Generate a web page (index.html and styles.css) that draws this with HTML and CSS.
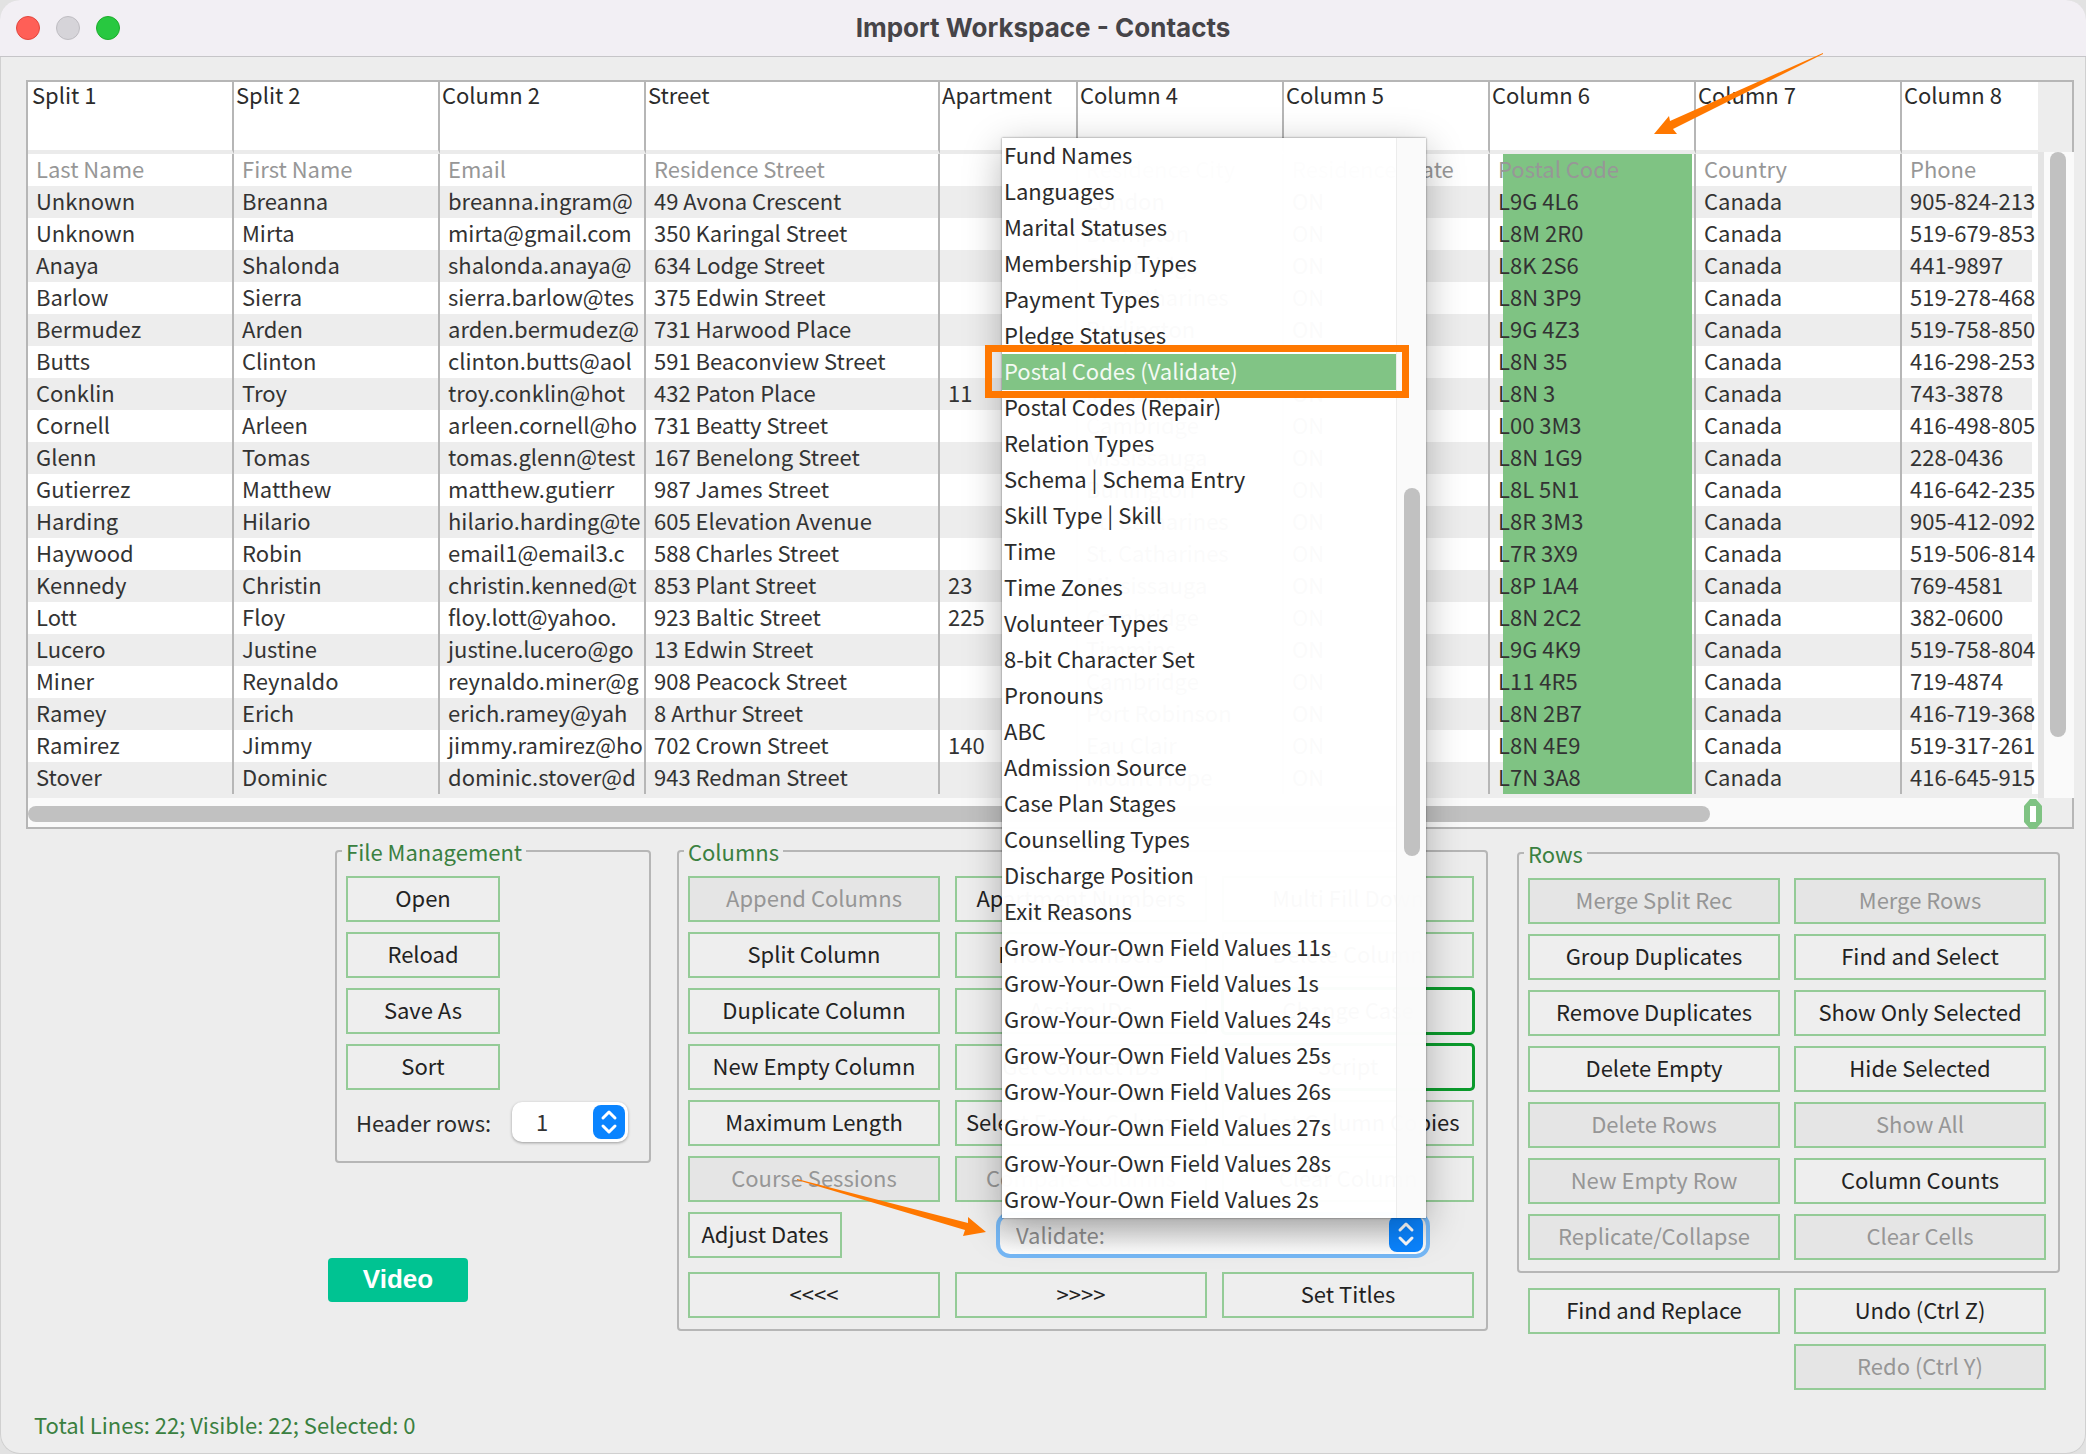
FILE: index.html
```html
<!DOCTYPE html>
<html lang="en">
<head>
    <meta charset="UTF-8">
    <meta name="viewport" content="width=device-width, initial-scale=1.0">
    <title>Import Workspace - Contacts</title>
    <link rel="stylesheet" href="styles.css">
</head>
<body>

<div class="window">
    <header class="titlebar">
        <div class="lights">
            <span class="light close"></span>
            <span class="light minimize"></span>
            <span class="light zoom"></span>
        </div>
        <h1>Import Workspace - Contacts</h1>
    </header>

    <!-- Imported data -->
    <div class="sheet">
        <table>
            <colgroup>
                <col class="normal"><col class="normal"><col class="normal"><col class="wide"><col class="narrow">
                <col class="normal"><col class="normal"><col class="normal"><col class="normal"><col>
            </colgroup>
            <thead>
                <tr><th>Split 1</th><th>Split 2</th><th>Column 2</th><th>Street</th><th>Apartment</th><th>Column 4</th><th>Column 5</th><th>Column 6</th><th>Column 7</th><th>Column 8</th></tr>
            </thead>
            <tbody>
                <tr class="titles"><td>Last Name</td><td>First Name</td><td>Email</td><td>Residence Street</td><td></td><td>Residence City</td><td>Residence State</td><td class="picked">Postal Code</td><td>Country</td><td>Phone</td></tr>
                <tr><td>Unknown</td><td>Breanna</td><td>breanna.ingram@</td><td>49 Avona Crescent</td><td></td><td>London</td><td>ON</td><td class="picked">L9G 4L6</td><td>Canada</td><td>905-824-213</td></tr>
                <tr><td>Unknown</td><td>Mirta</td><td>mirta@gmail.com</td><td>350 Karingal Street</td><td></td><td>Brampton</td><td>ON</td><td class="picked">L8M 2R0</td><td>Canada</td><td>519-679-853</td></tr>
                <tr><td>Anaya</td><td>Shalonda</td><td>shalonda.anaya@</td><td>634 Lodge Street</td><td></td><td>Cambridge</td><td>ON</td><td class="picked">L8K 2S6</td><td>Canada</td><td>441-9897</td></tr>
                <tr><td>Barlow</td><td>Sierra</td><td>sierra.barlow@tes</td><td>375 Edwin Street</td><td></td><td>St. Catharines</td><td>ON</td><td class="picked">L8N 3P9</td><td>Canada</td><td>519-278-468</td></tr>
                <tr><td>Bermudez</td><td>Arden</td><td>arden.bermudez@</td><td>731 Harwood Place</td><td></td><td>Burlington</td><td>ON</td><td class="picked">L9G 4Z3</td><td>Canada</td><td>519-758-850</td></tr>
                <tr><td>Butts</td><td>Clinton</td><td>clinton.butts@aol</td><td>591 Beaconview Street</td><td></td><td>Burlington</td><td>ON</td><td class="picked">L8N 35</td><td>Canada</td><td>416-298-253</td></tr>
                <tr><td>Conklin</td><td>Troy</td><td>troy.conklin@hot</td><td>432 Paton Place</td><td>11</td><td>Mississauga</td><td>ON</td><td class="picked">L8N 3</td><td>Canada</td><td>743-3878</td></tr>
                <tr><td>Cornell</td><td>Arleen</td><td>arleen.cornell@ho</td><td>731 Beatty Street</td><td></td><td>Cambridge</td><td>ON</td><td class="picked">L00 3M3</td><td>Canada</td><td>416-498-805</td></tr>
                <tr><td>Glenn</td><td>Tomas</td><td>tomas.glenn@test</td><td>167 Benelong Street</td><td></td><td>Mississauga</td><td>ON</td><td class="picked">L8N 1G9</td><td>Canada</td><td>228-0436</td></tr>
                <tr><td>Gutierrez</td><td>Matthew</td><td>matthew.gutierr</td><td>987 James Street</td><td></td><td>Burlington</td><td>ON</td><td class="picked">L8L 5N1</td><td>Canada</td><td>416-642-235</td></tr>
                <tr><td>Harding</td><td>Hilario</td><td>hilario.harding@te</td><td>605 Elevation Avenue</td><td></td><td>St. Catharines</td><td>ON</td><td class="picked">L8R 3M3</td><td>Canada</td><td>905-412-092</td></tr>
                <tr><td>Haywood</td><td>Robin</td><td>email1@email3.c</td><td>588 Charles Street</td><td></td><td>St. Catharines</td><td>ON</td><td class="picked">L7R 3X9</td><td>Canada</td><td>519-506-814</td></tr>
                <tr><td>Kennedy</td><td>Christin</td><td>christin.kenned@t</td><td>853 Plant Street</td><td>23</td><td>Mississauga</td><td>ON</td><td class="picked">L8P 1A4</td><td>Canada</td><td>769-4581</td></tr>
                <tr><td>Lott</td><td>Floy</td><td>floy.lott@yahoo.</td><td>923 Baltic Street</td><td>225</td><td>Cambridge</td><td>ON</td><td class="picked">L8N 2C2</td><td>Canada</td><td>382-0600</td></tr>
                <tr><td>Lucero</td><td>Justine</td><td>justine.lucero@go</td><td>13 Edwin Street</td><td></td><td>Timmins</td><td>ON</td><td class="picked">L9G 4K9</td><td>Canada</td><td>519-758-804</td></tr>
                <tr><td>Miner</td><td>Reynaldo</td><td>reynaldo.miner@g</td><td>908 Peacock Street</td><td></td><td>Cambridge</td><td>ON</td><td class="picked">L11 4R5</td><td>Canada</td><td>719-4874</td></tr>
                <tr><td>Ramey</td><td>Erich</td><td>erich.ramey@yah</td><td>8 Arthur Street</td><td></td><td>Port Robinson</td><td>ON</td><td class="picked">L8N 2B7</td><td>Canada</td><td>416-719-368</td></tr>
                <tr><td>Ramirez</td><td>Jimmy</td><td>jimmy.ramirez@ho</td><td>702 Crown Street</td><td>140</td><td>Eau Clair</td><td>ON</td><td class="picked">L8N 4E9</td><td>Canada</td><td>519-317-261</td></tr>
                <tr><td>Stover</td><td>Dominic</td><td>dominic.stover@d</td><td>943 Redman Street</td><td></td><td>Mount Hope</td><td>ON</td><td class="picked">L7N 3A8</td><td>Canada</td><td>416-645-915</td></tr>
            </tbody>
        </table>
        <div class="side">
            <div class="corner"></div>
            <div class="vscroll"><div class="vthumb"></div></div>
        </div>
        <div class="hscroll"><div class="hthumb"></div></div>
        <div class="corner bottom">
            <svg class="zero" width="18" height="30" viewBox="0 0 18 30">
                <path fill="#7fc383" d="M6 0h6l6 7v16l-6 7H6l-6-7V7z"/>
                <path fill="#fff" d="M6 7h6v16H6z"/>
            </svg>
        </div>
    </div>

    <!-- Tools -->
    <main class="tools">
        <div class="left">
            <fieldset class="files">
                <legend>File Management</legend>
                <button type="button">Open</button>
                <button type="button">Reload</button>
                <button type="button">Save As</button>
                <button type="button">Sort</button>
                <div class="header-rows">
                    <label for="headerRows">Header rows:</label>
                    <div class="select">
                        <select id="headerRows">
                            <option>1</option>
                        </select>
                        <svg class="knob" width="32" height="34" viewBox="0 0 32 34">
                            <rect width="32" height="34" rx="8" fill="#0a84ff"/>
                            <path d="M10 13l6-6 6 6M10 21l6 6 6-6" fill="none" stroke="#fff" stroke-width="3" stroke-linecap="round" stroke-linejoin="round"/>
                        </svg>
                    </div>
                </div>
            </fieldset>
            <button type="button" class="video">Video</button>
        </div>

        <fieldset class="columns">
            <legend>Columns</legend>
            <button type="button" disabled>Append Columns</button>
            <button type="button">Apartment Numbers</button>
            <button type="button">Multi Fill Down</button>
            <button type="button">Split Column</button>
            <button type="button">Phone Numbers</button>
            <button type="button">Delete Column</button>
            <button type="button">Duplicate Column</button>
            <button type="button">Assign IDs</button>
            <button type="button" class="strong">Change Case</button>
            <button type="button">New Empty Column</button>
            <button type="button">Get Contact IDs</button>
            <button type="button" class="strong">Script</button>
            <button type="button">Maximum Length</button>
            <button type="button">Select Empty Columns</button>
            <button type="button">Select Column Copies</button>
            <button type="button" disabled>Course Sessions</button>
            <button type="button" disabled>Compare Columns</button>
            <button type="button">Clear Column</button>
            <div class="dates">
                <button type="button">Adjust Dates</button>
                <div class="select validate">
                    <select id="validate" aria-label="Validate">
                        <option>Validate:</option>
                    </select>
                    <svg class="knob" width="34" height="36" viewBox="0 0 34 36">
                        <rect width="34" height="36" rx="8" fill="#0a84ff"/>
                        <path d="M11 14l6-6 6 6M11 22l6 6 6-6" fill="none" stroke="#fff" stroke-width="3" stroke-linecap="round" stroke-linejoin="round"/>
                    </svg>

                    <!-- Open list of the validate box -->
                    <div class="menu">
                        <ul role="listbox" aria-label="Validate">
                            <li role="option">Fund Names</li>
                            <li role="option">Languages</li>
                            <li role="option">Marital Statuses</li>
                            <li role="option">Membership Types</li>
                            <li role="option">Payment Types</li>
                            <li role="option">Pledge Statuses</li>
                            <li role="option" aria-selected="true" class="selected">Postal Codes (Validate)</li>
                            <li role="option">Postal Codes (Repair)</li>
                            <li role="option">Relation Types</li>
                            <li role="option">Schema | Schema Entry</li>
                            <li role="option">Skill Type | Skill</li>
                            <li role="option">Time</li>
                            <li role="option">Time Zones</li>
                            <li role="option">Volunteer Types</li>
                            <li role="option">8-bit Character Set</li>
                            <li role="option">Pronouns</li>
                            <li role="option">ABC</li>
                            <li role="option">Admission Source</li>
                            <li role="option">Case Plan Stages</li>
                            <li role="option">Counselling Types</li>
                            <li role="option">Discharge Position</li>
                            <li role="option">Exit Reasons</li>
                            <li role="option">Grow-Your-Own Field Values 11s</li>
                            <li role="option">Grow-Your-Own Field Values 1s</li>
                            <li role="option">Grow-Your-Own Field Values 24s</li>
                            <li role="option">Grow-Your-Own Field Values 25s</li>
                            <li role="option">Grow-Your-Own Field Values 26s</li>
                            <li role="option">Grow-Your-Own Field Values 27s</li>
                            <li role="option">Grow-Your-Own Field Values 28s</li>
                            <li role="option">Grow-Your-Own Field Values 2s</li>
                        </ul>
                        <div class="menu-scroll"><div class="menu-thumb"></div></div>
                    </div>
                    <svg class="arrow to-validate" width="190" height="60" viewBox="0 0 190 60">
                        <path fill="#ff7800" d="M0 1L171 45V39L189 54L166 58L168 52L0 2z"/>
                    </svg>
                </div>
            </div>
            <button type="button">&lt;&lt;&lt;&lt;</button>
            <button type="button">&gt;&gt;&gt;&gt;</button>
            <button type="button">Set Titles</button>
        </fieldset>

        <div class="right">
            <fieldset class="rows">
                <legend>Rows</legend>
                <button type="button" disabled>Merge Split Rec</button>
                <button type="button" disabled>Merge Rows</button>
                <button type="button">Group Duplicates</button>
                <button type="button">Find and Select</button>
                <button type="button">Remove Duplicates</button>
                <button type="button">Show Only Selected</button>
                <button type="button">Delete Empty</button>
                <button type="button">Hide Selected</button>
                <button type="button" disabled>Delete Rows</button>
                <button type="button" disabled>Show All</button>
                <button type="button" disabled>New Empty Row</button>
                <button type="button">Column Counts</button>
                <button type="button" disabled>Replicate/Collapse</button>
                <button type="button" disabled>Clear Cells</button>
            </fieldset>
            <div class="history">
                <button type="button">Find and Replace</button>
                <button type="button">Undo (Ctrl Z)</button>
                <button type="button" class="redo" disabled>Redo (Ctrl Y)</button>
            </div>
        </div>
    </main>

    <footer>Total Lines: 22; Visible: 22; Selected: 0</footer>

    <svg class="arrow to-column" width="170" height="82" viewBox="0 0 170 82">
        <path fill="#ff7800" d="M169 0L16 68L15 63L0 81H23L19 76L169 1z"/>
    </svg>
</div>

</body>
</html>
```
FILE: styles.css
```css
* {
    box-sizing: border-box;
}

body {
    margin: 0;
    background-color: #e2e2e2;
    font-family: "Noto Sans CJK SC", "Noto Sans", sans-serif;
    font-size: 22px;
    line-height: 32px;
    color: #2b2b2b;
}

.window {
    position: relative;
    display: flex;
    flex-direction: column;
    min-height: 100vh;
    background-color: #ededed;
    border-radius: 20px;
    box-shadow: inset 0 0 0 1px #d0d0d0;
}

/* Title bar */
.titlebar {
    display: grid;
    grid-template-columns: 1fr auto 1fr;
    align-items: center;
    height: 57px;
    padding: 0 16px;
    background-color: #f2eff4;
    border-bottom: 1px solid #c6c5c8;
    border-radius: 20px 20px 0 0;
}

.titlebar h1 {
    margin: 0;
    font-family: Inter, sans-serif;
    font-size: 26px;
    font-weight: 700;
    color: #464448;
}

.lights {
    display: flex;
    gap: 16px;
}

.light {
    width: 24px;
    height: 24px;
    border-radius: 50%;
    border: 1px solid #e2463d;
    background-color: #ff5f57;
}

.minimize {
    border-color: #bfbdc2;
    background-color: #d6d4d9;
}

.zoom {
    border-color: #1dad2b;
    background-color: #28c840;
}

/* Data sheet */
.sheet {
    display: grid;
    grid-template-columns: 1fr 36px;
    margin: 23px 12px 0 26px;
    border: solid #b6b6b6;
    border-width: 2px 0 2px 2px;
}

table {
    width: 100%;
    table-layout: fixed;
    border-collapse: separate;
    border-spacing: 0;
    margin-bottom: 4px;
}

.normal {
    width: 206px;
}

.wide {
    width: 294px;
}

.narrow {
    width: 138px;
}

th, td {
    padding: 0 0 0 8px;
    border-right: 2px solid #b6b6b6;
    text-align: left;
    vertical-align: top;
    font-weight: normal;
    white-space: nowrap;
}

th {
    height: 72px;
    padding-left: 2px;
    line-height: 25px;
    background-color: #fff;
    border-bottom: 4px solid #ebebeb;
}

td {
    height: 32px;
    line-height: 29px;
    color: #333;
}

th:first-child {
    padding-left: 4px;
}

th:last-child {
    border-right: none;
}

td:last-child {
    border-right: 6px solid #fff;
}

tbody tr:nth-child(odd) {
    background-color: #fff;
}

.titles td {
    color: #979797;
}

.picked {
    background-image: linear-gradient(#7fc383, #7fc383);
    background-size: calc(100% - 15px) 100%;
    background-position: 13px 0;
    background-repeat: no-repeat;
}

.side {
    display: flex;
    flex-direction: column;
}

.corner {
    height: 70px;
    border-right: 2px solid #b6b6b6;
}

.vscroll {
    flex: 1;
    padding: 0 8px 0 6px;
    border-left: 6px solid #e4e4e4;
    background-color: #fafafa;
}

.vthumb {
    width: 16px;
    height: 585px;
    border-radius: 8px;
    background-color: #c1c1c1;
}

.hscroll {
    height: 29px;
    padding: 8px 328px 0 0;
    background-color: #fafafa;
}

.hthumb {
    height: 16px;
    border-radius: 8px;
    background-color: #c1c1c1;
}

.bottom {
    position: relative;
    height: 29px;
}

.zero {
    position: absolute;
    left: -14px;
    top: 1px;
}

/* Tools under the sheet */
.tools {
    display: flex;
    justify-content: flex-end;
    align-items: flex-start;
    gap: 26px;
    padding: 6px 26px 0;
}

fieldset {
    margin: 0;
    min-width: 0;
    padding: 9px 9px 11px;
    border: 2px solid #b6b6b6;
    border-radius: 4px;
}

legend {
    margin-left: -4px;
    padding: 0 4px;
    color: #3a8040;
}

button {
    height: 46px;
    padding: 0 0 4px;
    border: 2px solid #94cb97;
    background-color: #eee;
    font: inherit;
    line-height: 32px;
    color: #222;
    white-space: nowrap;
}

button:disabled {
    background-color: #e5e5e5;
    color: #969696;
}

.strong {
    border-color: #0b9a2c;
    border-radius: 4px;
    box-shadow: 0 0 0 1px #0b9a2c;
}

.left {
    width: 323px;
}

.files {
    margin-left: 7px;
}

.files button {
    display: block;
    width: 154px;
    margin-bottom: 10px;
}

.header-rows {
    display: flex;
    align-items: center;
    justify-content: space-between;
    height: 50px;
    padding: 0 12px 6px 10px;
}

.select {
    position: relative;
    width: 116px;
    height: 40px;
}

.select select {
    width: 100%;
    height: 100%;
    padding: 0 0 3px 24px;
    appearance: none;
    border: none;
    border-radius: 10px;
    background-color: #fff;
    box-shadow: 0 1px 3px rgba(0, 0, 0, 0.35);
    font: inherit;
    color: #333;
}

.knob {
    position: absolute;
    right: 3px;
    top: 3px;
}

.video {
    display: block;
    width: 140px;
    height: 44px;
    margin-top: 95px;
    padding-bottom: 2px;
    border: none;
    border-radius: 4px;
    background-color: #00c392;
    font-family: "Liberation Sans", Arial, sans-serif;
    font-size: 26px;
    font-weight: bold;
    color: #fff;
}

.columns {
    display: grid;
    grid-template-columns: repeat(3, 252px);
    gap: 10px 15px;
    padding-right: 12px;
}

.dates {
    grid-column: 1 / -1;
    display: flex;
    justify-content: space-between;
    height: 50px;
    padding-right: 48px;
}

.dates button {
    width: 154px;
}

.validate {
    width: 426px;
    margin-top: 4px;
}

.validate select {
    height: 38px;
    padding-left: 16px;
    background-image: linear-gradient(#dcdcdc, #fff);
    box-shadow: 0 0 0 4px #76b8f6;
    color: #8c8c8c;
}

.validate .knob {
    top: 0;
}

/* Drop-down list */
.menu {
    position: absolute;
    z-index: 2;
    left: 2px;
    right: 0;
    bottom: 38px;
    display: flex;
    background-color: rgba(255, 255, 255, 0.98);
    box-shadow: 0 0 2px rgba(0, 0, 0, 0.5), 0 10px 36px rgba(0, 0, 0, 0.28);
}

.menu ul {
    flex: 1;
    margin: 0;
    padding: 0;
    list-style: none;
}

.menu li {
    height: 36px;
    padding-left: 2px;
    line-height: 33px;
}

.menu .selected {
    position: relative;
    background-color: #81c485;
    color: #f4faf4;
}

.selected::after {
    content: "";
    position: absolute;
    left: -17px;
    right: -13px;
    top: -9px;
    bottom: -8px;
    border: 7px solid #ff7800;
}

.menu-scroll {
    width: 30px;
    padding: 350px 6px 0 7px;
    border-left: 1px solid #ececec;
    background-color: rgba(248, 248, 248, 0.7);
}

.menu-thumb {
    width: 16px;
    height: 368px;
    border-radius: 8px;
    background-color: #c1c1c1;
}

/* Pointers */
.arrow {
    position: absolute;
    z-index: 3;
}

.to-validate {
    left: -203px;
    top: -38px;
}

.to-column {
    right: 262px;
    top: 53px;
}

/* Rows panel */
.right {
    margin: 2px 0 0 3px;
}

.rows, .history {
    display: grid;
    grid-template-columns: repeat(2, 252px);
    gap: 10px 14px;
}

.rows {
    padding-right: 12px;
}

.history {
    padding: 15px 0 0 11px;
}

.redo {
    grid-column: 2;
}

footer {
    margin-top: auto;
    padding: 0 34px 14px;
    color: #3a8040;
}
```
